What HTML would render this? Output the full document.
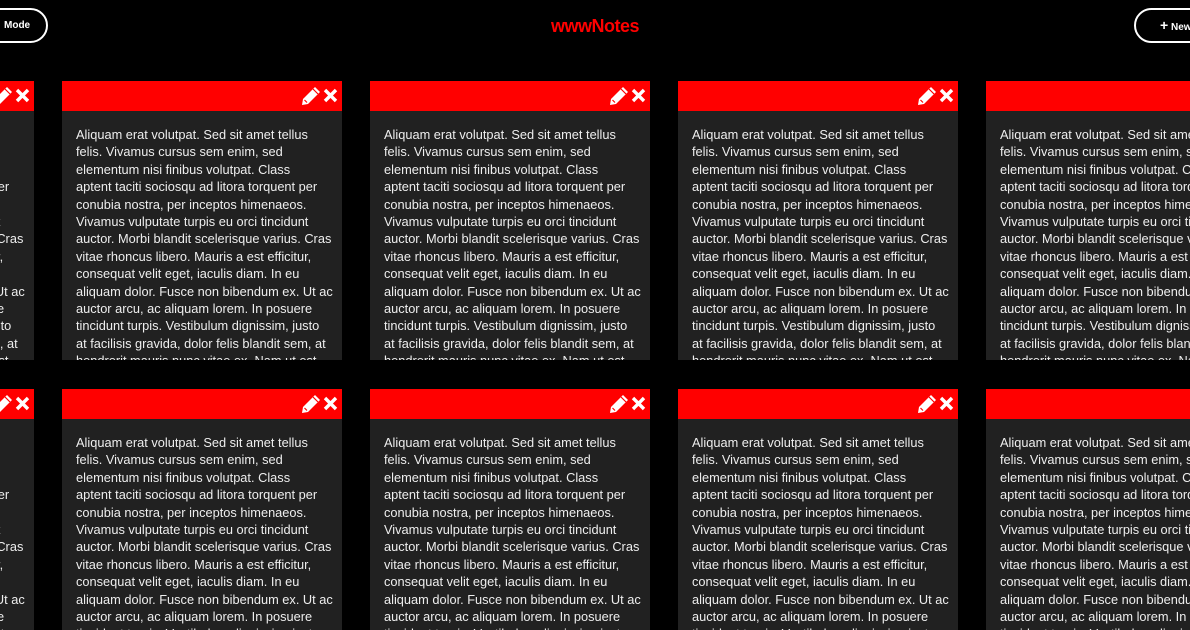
<!DOCTYPE html>
<html><head><meta charset="utf-8"><style>
*{margin:0;padding:0;box-sizing:border-box}
html,body{width:1190px;height:630px;overflow:hidden;background:#000;font-family:"Liberation Sans",sans-serif;position:relative}
.btn{position:absolute;top:8px;height:35px;border:2px solid #fff;border-radius:18px;color:#fff;font-size:10px;font-weight:bold;line-height:31px}
.title{position:absolute;top:16px;left:0;width:1190px;text-align:center;color:#f00;font-weight:bold;font-size:18px;letter-spacing:-0.5px}
.card{position:absolute;width:280px;height:279px;background:#212121;overflow:hidden}
.r2{height:241px}
.hd{height:30px;background:#f00;position:relative}
.hd svg{position:absolute;top:5px;right:3px}
.bd{padding:15px 14px 0 14px;color:#eee;font-size:12.8px;line-height:17.4px;white-space:nowrap}
</style></head><body>
<div class="btn" style="left:-60px;width:108px;padding-left:62px">Mode</div>
<div class="btn" style="left:1134px;width:100px;padding-left:24px"><span style="font-size:14px">+</span> New</div>
<div class="title">wwwNotes</div>

<div class="card" style="left:-246px;top:81px"><div class="hd"><svg width="38" height="20" viewBox="0 0 38 20"><path d="M1 19 L2 13 L14 1 L19 6 L7 18 Z" fill="#fff"/><path d="M3.5 14 L6 16.5 M12 3 L17 8" stroke="#f00" stroke-width="1.2"/><path d="M24 4 L35 15 M35 4 L24 15" stroke="#fff" stroke-width="3.4"/></svg></div><div class="bd">Aliquam erat volutpat. Sed sit amet tellus<br>felis. Vivamus cursus sem enim, sed<br>elementum nisi finibus volutpat. Class<br>aptent taciti sociosqu ad litora torquent per<br>conubia nostra, per inceptos himenaeos.<br>Vivamus vulputate turpis eu orci tincidunt<br>auctor. Morbi blandit scelerisque varius. Cras<br>vitae rhoncus libero. Mauris a est efficitur,<br>consequat velit eget, iaculis diam. In eu<br>aliquam dolor. Fusce non bibendum ex. Ut ac<br>auctor arcu, ac aliquam lorem. In posuere<br>tincidunt turpis. Vestibulum dignissim, justo<br>at facilisis gravida, dolor felis blandit sem, at<br>hendrerit mauris nunc vitae ex. Nam ut est</div></div>
<div class="card" style="left:62px;top:81px"><div class="hd"><svg width="38" height="20" viewBox="0 0 38 20"><path d="M1 19 L2 13 L14 1 L19 6 L7 18 Z" fill="#fff"/><path d="M3.5 14 L6 16.5 M12 3 L17 8" stroke="#f00" stroke-width="1.2"/><path d="M24 4 L35 15 M35 4 L24 15" stroke="#fff" stroke-width="3.4"/></svg></div><div class="bd">Aliquam erat volutpat. Sed sit amet tellus<br>felis. Vivamus cursus sem enim, sed<br>elementum nisi finibus volutpat. Class<br>aptent taciti sociosqu ad litora torquent per<br>conubia nostra, per inceptos himenaeos.<br>Vivamus vulputate turpis eu orci tincidunt<br>auctor. Morbi blandit scelerisque varius. Cras<br>vitae rhoncus libero. Mauris a est efficitur,<br>consequat velit eget, iaculis diam. In eu<br>aliquam dolor. Fusce non bibendum ex. Ut ac<br>auctor arcu, ac aliquam lorem. In posuere<br>tincidunt turpis. Vestibulum dignissim, justo<br>at facilisis gravida, dolor felis blandit sem, at<br>hendrerit mauris nunc vitae ex. Nam ut est</div></div>
<div class="card" style="left:370px;top:81px"><div class="hd"><svg width="38" height="20" viewBox="0 0 38 20"><path d="M1 19 L2 13 L14 1 L19 6 L7 18 Z" fill="#fff"/><path d="M3.5 14 L6 16.5 M12 3 L17 8" stroke="#f00" stroke-width="1.2"/><path d="M24 4 L35 15 M35 4 L24 15" stroke="#fff" stroke-width="3.4"/></svg></div><div class="bd">Aliquam erat volutpat. Sed sit amet tellus<br>felis. Vivamus cursus sem enim, sed<br>elementum nisi finibus volutpat. Class<br>aptent taciti sociosqu ad litora torquent per<br>conubia nostra, per inceptos himenaeos.<br>Vivamus vulputate turpis eu orci tincidunt<br>auctor. Morbi blandit scelerisque varius. Cras<br>vitae rhoncus libero. Mauris a est efficitur,<br>consequat velit eget, iaculis diam. In eu<br>aliquam dolor. Fusce non bibendum ex. Ut ac<br>auctor arcu, ac aliquam lorem. In posuere<br>tincidunt turpis. Vestibulum dignissim, justo<br>at facilisis gravida, dolor felis blandit sem, at<br>hendrerit mauris nunc vitae ex. Nam ut est</div></div>
<div class="card" style="left:678px;top:81px"><div class="hd"><svg width="38" height="20" viewBox="0 0 38 20"><path d="M1 19 L2 13 L14 1 L19 6 L7 18 Z" fill="#fff"/><path d="M3.5 14 L6 16.5 M12 3 L17 8" stroke="#f00" stroke-width="1.2"/><path d="M24 4 L35 15 M35 4 L24 15" stroke="#fff" stroke-width="3.4"/></svg></div><div class="bd">Aliquam erat volutpat. Sed sit amet tellus<br>felis. Vivamus cursus sem enim, sed<br>elementum nisi finibus volutpat. Class<br>aptent taciti sociosqu ad litora torquent per<br>conubia nostra, per inceptos himenaeos.<br>Vivamus vulputate turpis eu orci tincidunt<br>auctor. Morbi blandit scelerisque varius. Cras<br>vitae rhoncus libero. Mauris a est efficitur,<br>consequat velit eget, iaculis diam. In eu<br>aliquam dolor. Fusce non bibendum ex. Ut ac<br>auctor arcu, ac aliquam lorem. In posuere<br>tincidunt turpis. Vestibulum dignissim, justo<br>at facilisis gravida, dolor felis blandit sem, at<br>hendrerit mauris nunc vitae ex. Nam ut est</div></div>
<div class="card" style="left:986px;top:81px"><div class="hd"><svg width="38" height="20" viewBox="0 0 38 20"><path d="M1 19 L2 13 L14 1 L19 6 L7 18 Z" fill="#fff"/><path d="M3.5 14 L6 16.5 M12 3 L17 8" stroke="#f00" stroke-width="1.2"/><path d="M24 4 L35 15 M35 4 L24 15" stroke="#fff" stroke-width="3.4"/></svg></div><div class="bd">Aliquam erat volutpat. Sed sit amet tellus<br>felis. Vivamus cursus sem enim, sed<br>elementum nisi finibus volutpat. Class<br>aptent taciti sociosqu ad litora torquent per<br>conubia nostra, per inceptos himenaeos.<br>Vivamus vulputate turpis eu orci tincidunt<br>auctor. Morbi blandit scelerisque varius. Cras<br>vitae rhoncus libero. Mauris a est efficitur,<br>consequat velit eget, iaculis diam. In eu<br>aliquam dolor. Fusce non bibendum ex. Ut ac<br>auctor arcu, ac aliquam lorem. In posuere<br>tincidunt turpis. Vestibulum dignissim, justo<br>at facilisis gravida, dolor felis blandit sem, at<br>hendrerit mauris nunc vitae ex. Nam ut est</div></div>

<div class="card r2" style="left:-246px;top:389px"><div class="hd"><svg width="38" height="20" viewBox="0 0 38 20"><path d="M1 19 L2 13 L14 1 L19 6 L7 18 Z" fill="#fff"/><path d="M3.5 14 L6 16.5 M12 3 L17 8" stroke="#f00" stroke-width="1.2"/><path d="M24 4 L35 15 M35 4 L24 15" stroke="#fff" stroke-width="3.4"/></svg></div><div class="bd">Aliquam erat volutpat. Sed sit amet tellus<br>felis. Vivamus cursus sem enim, sed<br>elementum nisi finibus volutpat. Class<br>aptent taciti sociosqu ad litora torquent per<br>conubia nostra, per inceptos himenaeos.<br>Vivamus vulputate turpis eu orci tincidunt<br>auctor. Morbi blandit scelerisque varius. Cras<br>vitae rhoncus libero. Mauris a est efficitur,<br>consequat velit eget, iaculis diam. In eu<br>aliquam dolor. Fusce non bibendum ex. Ut ac<br>auctor arcu, ac aliquam lorem. In posuere<br>tincidunt turpis. Vestibulum dignissim, justo</div></div>
<div class="card r2" style="left:62px;top:389px"><div class="hd"><svg width="38" height="20" viewBox="0 0 38 20"><path d="M1 19 L2 13 L14 1 L19 6 L7 18 Z" fill="#fff"/><path d="M3.5 14 L6 16.5 M12 3 L17 8" stroke="#f00" stroke-width="1.2"/><path d="M24 4 L35 15 M35 4 L24 15" stroke="#fff" stroke-width="3.4"/></svg></div><div class="bd">Aliquam erat volutpat. Sed sit amet tellus<br>felis. Vivamus cursus sem enim, sed<br>elementum nisi finibus volutpat. Class<br>aptent taciti sociosqu ad litora torquent per<br>conubia nostra, per inceptos himenaeos.<br>Vivamus vulputate turpis eu orci tincidunt<br>auctor. Morbi blandit scelerisque varius. Cras<br>vitae rhoncus libero. Mauris a est efficitur,<br>consequat velit eget, iaculis diam. In eu<br>aliquam dolor. Fusce non bibendum ex. Ut ac<br>auctor arcu, ac aliquam lorem. In posuere<br>tincidunt turpis. Vestibulum dignissim, justo</div></div>
<div class="card r2" style="left:370px;top:389px"><div class="hd"><svg width="38" height="20" viewBox="0 0 38 20"><path d="M1 19 L2 13 L14 1 L19 6 L7 18 Z" fill="#fff"/><path d="M3.5 14 L6 16.5 M12 3 L17 8" stroke="#f00" stroke-width="1.2"/><path d="M24 4 L35 15 M35 4 L24 15" stroke="#fff" stroke-width="3.4"/></svg></div><div class="bd">Aliquam erat volutpat. Sed sit amet tellus<br>felis. Vivamus cursus sem enim, sed<br>elementum nisi finibus volutpat. Class<br>aptent taciti sociosqu ad litora torquent per<br>conubia nostra, per inceptos himenaeos.<br>Vivamus vulputate turpis eu orci tincidunt<br>auctor. Morbi blandit scelerisque varius. Cras<br>vitae rhoncus libero. Mauris a est efficitur,<br>consequat velit eget, iaculis diam. In eu<br>aliquam dolor. Fusce non bibendum ex. Ut ac<br>auctor arcu, ac aliquam lorem. In posuere<br>tincidunt turpis. Vestibulum dignissim, justo</div></div>
<div class="card r2" style="left:678px;top:389px"><div class="hd"><svg width="38" height="20" viewBox="0 0 38 20"><path d="M1 19 L2 13 L14 1 L19 6 L7 18 Z" fill="#fff"/><path d="M3.5 14 L6 16.5 M12 3 L17 8" stroke="#f00" stroke-width="1.2"/><path d="M24 4 L35 15 M35 4 L24 15" stroke="#fff" stroke-width="3.4"/></svg></div><div class="bd">Aliquam erat volutpat. Sed sit amet tellus<br>felis. Vivamus cursus sem enim, sed<br>elementum nisi finibus volutpat. Class<br>aptent taciti sociosqu ad litora torquent per<br>conubia nostra, per inceptos himenaeos.<br>Vivamus vulputate turpis eu orci tincidunt<br>auctor. Morbi blandit scelerisque varius. Cras<br>vitae rhoncus libero. Mauris a est efficitur,<br>consequat velit eget, iaculis diam. In eu<br>aliquam dolor. Fusce non bibendum ex. Ut ac<br>auctor arcu, ac aliquam lorem. In posuere<br>tincidunt turpis. Vestibulum dignissim, justo</div></div>
<div class="card r2" style="left:986px;top:389px"><div class="hd"><svg width="38" height="20" viewBox="0 0 38 20"><path d="M1 19 L2 13 L14 1 L19 6 L7 18 Z" fill="#fff"/><path d="M3.5 14 L6 16.5 M12 3 L17 8" stroke="#f00" stroke-width="1.2"/><path d="M24 4 L35 15 M35 4 L24 15" stroke="#fff" stroke-width="3.4"/></svg></div><div class="bd">Aliquam erat volutpat. Sed sit amet tellus<br>felis. Vivamus cursus sem enim, sed<br>elementum nisi finibus volutpat. Class<br>aptent taciti sociosqu ad litora torquent per<br>conubia nostra, per inceptos himenaeos.<br>Vivamus vulputate turpis eu orci tincidunt<br>auctor. Morbi blandit scelerisque varius. Cras<br>vitae rhoncus libero. Mauris a est efficitur,<br>consequat velit eget, iaculis diam. In eu<br>aliquam dolor. Fusce non bibendum ex. Ut ac<br>auctor arcu, ac aliquam lorem. In posuere<br>tincidunt turpis. Vestibulum dignissim, justo</div></div>
</body></html>
